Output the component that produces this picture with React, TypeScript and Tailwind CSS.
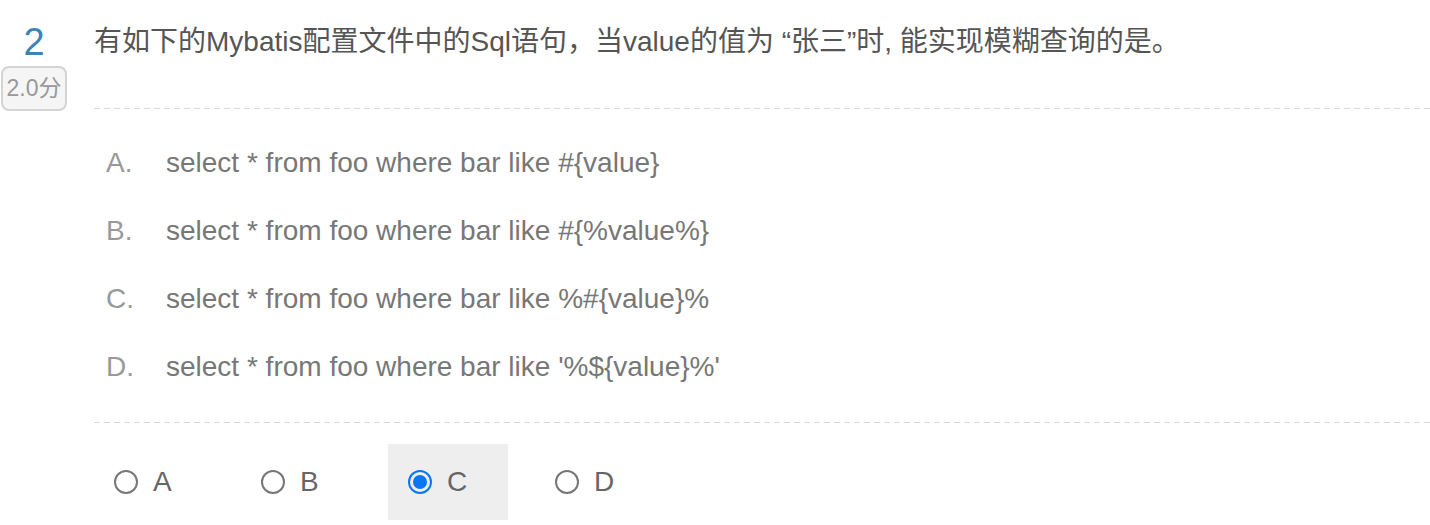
const options = [
  { key: 'A', text: 'select * from foo where bar like #{value}' },
  { key: 'B', text: 'select * from foo where bar like #{%value%}' },
  { key: 'C', text: 'select * from foo where bar like %#{value}%' },
  { key: 'D', text: "select * from foo where bar like '%${value}%'" },
];

function Dashed() {
  return <div className="h-px w-full bg-[linear-gradient(to_right,#d9d9d9_60%,transparent_0)] bg-[length:10px_1px] bg-repeat-x" />;
}

function Radio({ checked }: { checked: boolean }) {
  if (checked) {
    return (
      <span className="flex h-6 w-6 shrink-0 items-center justify-center rounded-full border-2 border-[#0a76f6]">
        <span className="h-[14px] w-[14px] rounded-full bg-[#0a76f6]" />
      </span>
    );
  }
  return <span className="h-6 w-6 shrink-0 rounded-full border-2 border-[#777]" />;
}

export default function App() {
  const picked = 'C';
  return (
    <div className="flex h-[525px] w-[1430px] overflow-hidden bg-white font-['Liberation_Sans','Noto_Sans_CJK_SC',sans-serif]">
      <div className="flex w-[68px] shrink-0 flex-col items-center pt-6">
        <div className="h-9 text-[38px] leading-9 text-[#3886b8]">2</div>
        <div className="mt-[6px] flex h-[45px] w-[66px] items-center justify-center rounded-lg border-2 border-[#d4d4d4] bg-[#f5f5f5] text-[23px] text-[#999]">
          2.0分
        </div>
      </div>

      <div className="ml-[26px] flex-1">
        <p className="pt-6 text-[28px] leading-9 text-[#555]">
          有如下的Mybatis配置文件中的Sql语句，当value的值为 “张三”时, 能实现模糊查询的是。
        </p>
        <div className="mt-12">
          <Dashed />
        </div>

        <div className="mt-5 flex flex-col">
          {options.map((o) => (
            <div key={o.key} className="flex h-[68px] items-center pl-3 text-[28px]">
              <span className="w-[60px] text-[#999]">{o.key}.</span>
              <span className="text-[#777]">{o.text}</span>
            </div>
          ))}
        </div>

        <div className="mt-[21px]">
          <Dashed />
        </div>

        <div className="mt-[21px] flex gap-[27px]">
          {options.map((o) => (
            <div
              key={o.key}
              className={`flex h-[76px] w-[120px] items-center gap-[15px] pl-5 text-[28px] text-[#666] ${o.key === picked ? 'bg-[#eeeeee]' : ''}`}
            >
              <Radio checked={o.key === picked} />
              <span>{o.key}</span>
            </div>
          ))}
        </div>
      </div>
    </div>
  );
}
